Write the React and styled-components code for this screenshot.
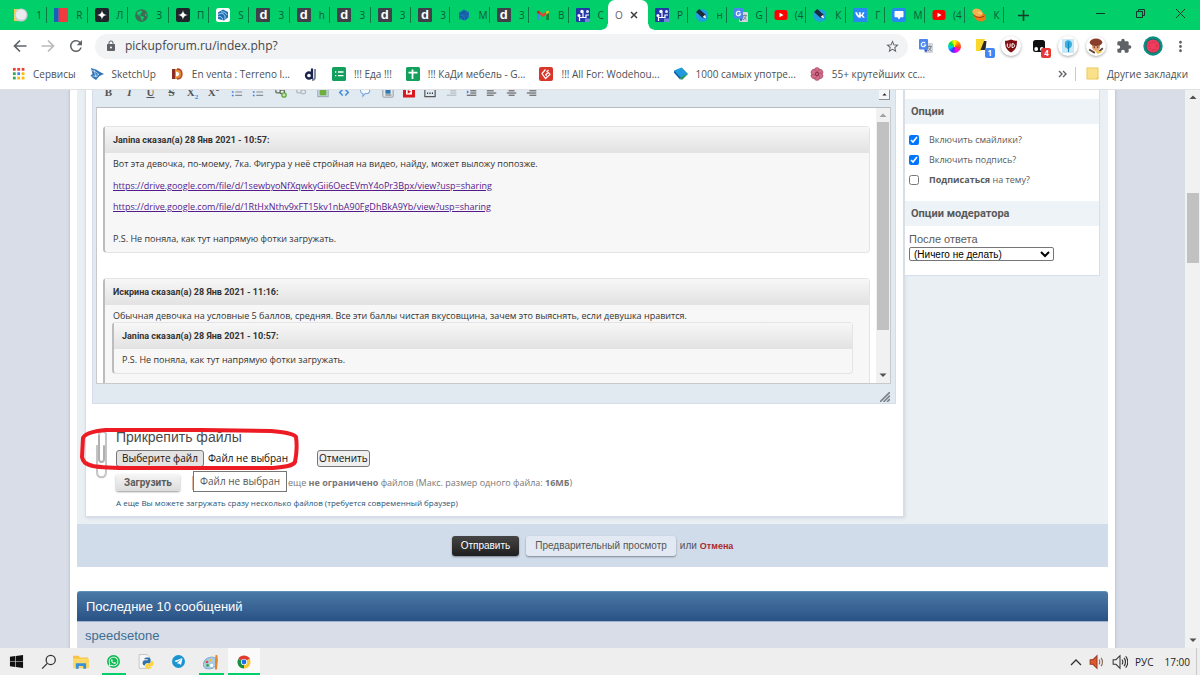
import React, { useRef } from "react";
import styled, { createGlobalStyle, css } from "styled-components";
import { FaVk, FaWhatsapp, FaTelegramPlane, FaWindows, FaGlobeAmericas } from "react-icons/fa";
import { MdLock, MdStarBorder, MdRefresh, MdMoreVert, MdExtension } from "react-icons/md";

const ui = '"Open Sans", "Noto Sans", sans-serif';
const web = '"Liberation Sans", Arial, sans-serif';
const strong = 'Roboto, "Liberation Sans", sans-serif';

const GlobalStyle = createGlobalStyle`
  * { box-sizing: border-box; }
  body { margin: 0; background: #fff; font-family: ${web}; }
  button { font: inherit; padding: 0; border: 0; background: none; color: inherit; cursor: pointer; }
  a { color: inherit; text-decoration: none; }
  p, h2, h3, h4 { margin: 0; }
  svg { display: block; flex: none; }
`;

const Screen = styled.div`
  display: flex;
  flex-direction: column;
  height: 100vh;
  overflow: hidden;
`;

/* ---------- browser window ---------- */

const TabBar = styled.header`
  display: flex;
  align-items: stretch;
  flex: none;
  height: 30px;
  padding-left: 7px;
  background: #00cf6a;
  font: 10px/14px ${ui};
`;

const TabStrip = styled.nav`
  display: flex;
  flex: 0 1 997px;
  min-width: 0;
`;

const TabGroup = styled.div`
  display: flex;
  flex: 1 1 ${(p) => p.$basis}px;
  min-width: 0;
`;

const Tab = styled.button`
  display: flex;
  flex: 1 1 0;
  align-items: center;
  gap: 7px;
  min-width: 0;
  height: 16px;
  margin-top: 7px;
  padding-left: 7px;
  border-right: 1px solid ${(p) => (p.$last ? "transparent" : "#0b7a45")};
  color: #0c5a35;
`;

const TabTitle = styled.span`
  width: 8px;
  white-space: nowrap;
`;

const ActiveTab = styled.div`
  position: relative;
  display: flex;
  flex: 1 1 40px;
  align-items: center;
  gap: 7px;
  padding-left: 7px;
  border-radius: 7px 7px 0 0;
  background: #fff;
  color: #5f6368;

  &::before,
  &::after {
    content: "";
    position: absolute;
    bottom: 0;
    width: 6px;
    height: 6px;
  }
  &::before {
    left: -6px;
    background: radial-gradient(circle at 0 0, transparent 5px, #fff 6px);
  }
  &::after {
    right: -6px;
    background: radial-gradient(circle at 100% 0, transparent 5px, #fff 6px);
  }
`;

const NewTab = styled.button`
  width: 38px;
  display: grid;
  place-items: center;
`;

const WindowButtons = styled.div`
  display: flex;
  margin-left: auto;
  height: 26px;
`;

const WindowButton = styled.button`
  width: 40px;
  display: grid;
  place-items: center;
`;

const Toolbar = styled.div`
  display: flex;
  align-items: center;
  flex: none;
  height: 32px;
  padding: 0 5px 0 6px;
  background: #fff;
`;

const NavButton = styled.button`
  display: grid;
  place-items: center;
  width: 28px;
  height: 28px;
  color: ${(p) => (p.$dim ? "#b8babd" : "#5f6368")};
`;

const Address = styled.div`
  display: flex;
  align-items: center;
  flex: 1;
  height: 25px;
  margin: 0 4px 0 5px;
  padding: 0 8px 0 10px;
  border-radius: 13px;
  background: #f1f3f4;
  color: #5f6368;
`;

const AddressInput = styled.input`
  flex: 1;
  min-width: 0;
  margin-left: 8px;
  padding: 0;
  border: 0;
  outline: 0;
  background: none;
  color: #45484c;
  font: 12px/18px ${ui};
`;

const Extensions = styled.div`
  display: flex;
  flex: 0 0 283px;
`;

const Extension = styled.button`
  position: relative;
  display: grid;
  place-items: center;
  flex: 1;
  height: 28px;
  color: #5f6368;
`;

const Halo = styled.span`
  display: grid;
  place-items: center;
  width: 20px;
  height: 20px;
  border-radius: 50%;
  background: #fff;
  box-shadow: 0 1px 3px rgba(0, 0, 0, 0.35);
`;

const Badge = styled.span`
  position: absolute;
  right: 2px;
  bottom: 2px;
  width: 10px;
  border-radius: 2px;
  background: ${(p) => p.$color};
  color: #fff;
  font: bold 8px/10px ${ui};
  text-align: center;
`;

const Bookmarks = styled.nav`
  display: flex;
  align-items: center;
  flex: none;
  gap: 14px;
  height: 28px;
  padding: 0 12px 4px;
  border-bottom: 1px solid #dfe1e5;
  background: #fff;
  color: #4c5054;
  font: 10px/14px ${ui};
  white-space: nowrap;
`;

const Bookmark = styled.a`
  display: flex;
  align-items: center;
  gap: 8px;
`;

const BookmarkEnd = styled.div`
  display: flex;
  align-items: center;
  gap: 8px;
  margin-left: auto;
`;

const Divider = styled.span`
  width: 1px;
  height: 14px;
  margin-right: 2px;
  background: #c8cacd;
`;

/* ---------- forum page ---------- */

const Viewport = styled.div`
  display: flex;
  flex: 1;
  min-height: 0;
  overflow: hidden;
  background: #d8dde8;
`;

const ScrollArea = styled.main`
  flex: 1;
  min-width: 0;
  overflow: hidden;
`;

const Column = styled.div`
  max-width: 1045px;
  min-height: 600px;
  margin: -10px auto 0;
  padding: 0 7px;
  background: #fff;
  box-shadow: 0 0 3px rgba(90, 100, 130, 0.35);
`;

const FormArea = styled.div`
  display: flex;
  align-items: flex-start;
  gap: 1px;
  padding: 0 8px 7px;
  background: #eaeff3;
`;

const Post = styled.section`
  flex: 1;
  min-width: 0;
  padding: 0 7px 7px 6px;
  border: 1px solid #d5deea;
  border-top: 0;
  background: #fff;
  box-shadow: 1px 1px 3px rgba(120, 140, 165, 0.25);
`;

const Editor = styled.div`
  padding: 0 4px 0 3px;
  border: 1px solid #d4dde8;
  border-top: 0;
  background: #e1e9f1;
`;

const EditorTools = styled.div`
  display: flex;
  align-items: center;
  height: 27px;
  padding: 0 1px 3px 2px;
`;

const ToolGroup = styled.div`
  display: flex;
  margin-right: 2px;
`;

const Tool = styled.button`
  display: grid;
  place-items: center;
  width: ${(p) => p.$width}px;
  height: 14px;
  color: #555;
  font: bold 11px/14px "Liberation Serif", serif;
`;

const Script = styled.small`
  color: ${(p) => p.$color};
  font-size: 7px;
  line-height: 0;
  vertical-align: ${(p) => p.$align};
`;

const Collapse = styled.button`
  display: grid;
  place-items: center;
  align-self: flex-end;
  width: 11px;
  height: 11px;
  margin-left: auto;
  margin-bottom: 4px;
  border: 1px solid #8a8f98;
  border-width: 0 1px 1px 0;
  background: #f4f6f8;
`;

const Frame = styled.div`
  display: flex;
  height: 277px;
  overflow: hidden;
  border: 1px solid #c9c9c9;
  border-top-color: #b8bcc2;
  background: #fff;
`;

const Doc = styled.div`
  flex: 1;
  min-width: 0;
  padding: 18px 6px 0;
  color: #333;
  font: 9px/14px ${ui};
`;

const ScrollTrack = styled.div`
  display: flex;
  flex-direction: column;
  align-items: center;
  flex: none;
  width: ${(p) => p.$width}px;
  padding: 5px 0;
  background: #f1f1f1;
`;

const ScrollThumb = styled.div`
  width: 12px;
  height: ${(p) => p.$height}px;
  margin: ${(p) => p.$top}px 0 auto;
  background: #c1c1c1;
`;

const Quote = styled.blockquote`
  margin: 0 0 25px;
  border: 1px solid #e4e4e4;
  border-left: 2px solid #bcbcbc;
  border-radius: 4px;
  background: #f7f7f7;
`;

const QuoteHead = styled.h4`
  padding: 0 8px;
  background: linear-gradient(#f7f7f7, #e2e2e2);
  font: bold 9px/26px ${strong};
`;

const QuoteBody = styled.div`
  padding: 4px 16px 6px 8px;

  ${Quote} {
    margin: -1px 0 12px -1px;
  }
`;

const QuoteText = styled.p`
  margin-top: ${(p) => p.$gap || 0}px;
`;

const VisitedLink = styled.a`
  color: #551a8b;
  text-decoration: underline;
`;

const EditorFoot = styled.div`
  display: flex;
  align-items: flex-end;
  justify-content: flex-end;
  height: 19px;
  padding: 1px;
`;

const Attach = styled.section`
  position: relative;
  display: flex;
  gap: 8px;
  margin-top: 24px;
  padding-left: 3px;
`;

const AttachBody = styled.div`
  min-width: 0;
`;

const AttachTitle = styled.h3`
  color: #4a4a4a;
  font: 14px/18px ${web};
`;

const FileRow = styled.div`
  display: flex;
  align-items: center;
  height: 17px;
  margin-top: 4px;
  color: #111;
  font: 10px/15px ${ui};
`;

const FormButton = styled.button`
  height: 17px;
  padding: 0 ${(p) => p.$pad}px;
  border: 1px solid #767676;
  border-radius: 3px;
  background: ${(p) => (p.$hover ? "#e3e3e3" : "#efefef")};
`;

const FileName = styled.span`
  flex: 0 0 113px;
  padding-left: 4px;
`;

const UploadRow = styled.div`
  position: relative;
  display: flex;
  align-items: center;
  height: 17px;
  margin-top: 7px;
  color: #777;
  font: 9px/14px ${ui};
  white-space: nowrap;
`;

const UploadButton = styled.button`
  width: 64px;
  height: 17px;
  border-radius: 2px;
  background: linear-gradient(#f6f6f6, #dcdcdc);
  box-shadow: 0 1px 2px rgba(0, 0, 0, 0.4);
  color: #5c5c5c;
  font: bold 10px/14px ${strong};
`;

const UploadNote = styled.span`
  margin-left: 12px;
  padding-left: 95px;
  border-left: 1px solid #e0b8a0;
`;

const Tooltip = styled.span`
  position: absolute;
  top: -3px;
  left: 77px;
  padding: 0 6px;
  border: 1px solid #767676;
  background: #fff;
  color: #575757;
  font: 10px/19px ${ui};
`;

const Hint = styled.p`
  margin-top: 6px;
  color: #1d5278;
  font: 8px/12px ${ui};
`;

const Scribble = styled.svg`
  position: absolute;
  top: -1px;
  left: -12px;
  pointer-events: none;
`;

const Sidebar = styled.aside`
  flex: 0 0 195px;
  padding: 19px 0 14px;
  border-right: 1px solid #d5e0ef;
  border-bottom: 1px solid #d5e0ef;
  background: #fff;
  color: #5a5a5a;
`;

const SideHead = styled.h3`
  padding-left: 6px;
  background: #eef3f7;
  font: bold 11px/25px ${strong};
`;

const OptionList = styled.div`
  padding: 6px 0 11px 4px;
`;

const Option = styled.label`
  display: flex;
  align-items: center;
  gap: 10px;
  height: 20px;
  font: 9px/14px ${ui};
`;

const Checkbox = styled.input`
  width: 10px;
  height: 10px;
  margin: 0;
`;

const AfterReply = styled.div`
  padding: 5px 0 0 4px;
  font: 11px/16px ${web};
`;

const FieldLabel = styled.label`
  display: block;
`;

const Select = styled.select`
  display: block;
  width: 145px;
  height: 14px;
  padding: 0;
  border: 1px solid #767676;
  border-radius: 2px;
  background-color: #fff;
  color: #000;
  font: 10px/12px ${web};
`;

const SubmitBar = styled.div`
  display: flex;
  align-items: center;
  justify-content: center;
  height: 43px;
  background: #d1dceb;
  color: #555;
  font: 10px/14px ${web};
`;

const SubmitButton = styled.button`
  height: 20px;
  padding: 0 9px;
  border-radius: 3px;
  box-shadow: 0 1px 2px rgba(0, 0, 0, 0.4);
  ${(p) =>
    p.$primary
      ? css`
          margin-right: 7px;
          background: linear-gradient(#454545, #1f1f1f);
          color: #fff;
        `
      : css`
          margin-right: 4px;
          background: #e2e9f2;
          color: #555;
        `}
`;

const CancelLink = styled.a`
  margin-left: 3px;
  color: #ad2930;
  font: bold 9px/14px ${web};
`;

const RecentHead = styled.h2`
  margin-top: 24px;
  padding-left: 9px;
  border-top: 1px solid #5b93b8;
  border-bottom: 1px solid #9db3cd;
  border-radius: 3px 3px 0 0;
  background: linear-gradient(#4a79a6, #2a5285);
  color: #fff;
  font: 13px/29px ${web};
`;

const RecentRow = styled.div`
  height: 60px;
  padding-left: 8px;
  background: #d8dde8;
  color: #3f6d90;
  font: 13px/27px ${web};
`;

/* ---------- taskbar ---------- */

const Taskbar = styled.footer`
  display: flex;
  flex: none;
  justify-content: space-between;
  height: 27px;
  background: #eeeeee;
  color: #222;
`;

const TaskButtons = styled.div`
  display: flex;
  flex: 0 0 260px;
`;

const TaskButton = styled.button`
  display: grid;
  place-items: center;
  flex: 1;
  position: relative;
  background: ${(p) => (p.$active ? "#fafafa" : "none")};

  &::after {
    content: "";
    position: absolute;
    inset: auto ${(p) => (p.$active ? 0 : 4)}px 0;
    height: ${(p) => (p.$open ? 2 : 0)}px;
    background: #00cf6a;
  }
`;

const Tray = styled.div`
  display: flex;
  align-items: center;
  gap: 7px;
  margin-right: 3px;
  padding-right: 6px;
  border-right: 1px solid #c9c9c9;
  font: 10px/16px ${ui};
`;

const Clock = styled.span`
  margin-left: 4px;
`;

/* ---------- icons ---------- */

const Tile = styled.span`
  display: grid;
  place-items: center;
  flex: none;
  width: 14px;
  height: 14px;
  border-radius: 1px;
  background: ${(p) => p.$bg};
  color: #fff;
  font: bold 13px/12px ${web};
`;

const Svg = ({ s = 14, children, ...rest }) => (
  <svg width={s} height={s} viewBox="0 0 14 14" fill="none" {...rest}>
    {children}
  </svg>
);

const PaintIcon = () => (
  <Svg>
    <path d="M0 1h8v12H0z" fill="#f2d14a" />
    <circle cx="7" cy="7" r="6.600" fill="#c9cdd3" />
    <circle cx="7" cy="6.600" r="5.200" fill="#e9ebee" />
  </Svg>
);
const FlagIcon = () => (
  <Svg>
    <path d="M0 0h4.500v14H0z" fill="#1263b5" />
    <path d="M4.500 0H14v14H4.500z" fill="#ef3b3f" />
    <path d="M4 0h1.500v14H4z" fill="#7a55a0" />
  </Svg>
);
const SparkIcon = () => (
  <Svg>
    <rect width="14" height="14" rx="2" fill="#20252b" />
    <path d="M7 2c.4 3.300 1.700 4.600 5 5-3.300.4-4.600 1.700-5 5-.4-3.300-1.700-4.600-5-5 3.300-.4 4.600-1.700 5-5z" fill="#fff" />
  </Svg>
);
const SketchTile = ({ tile }) => (
  <Svg>
    {tile && <rect width="14" height="14" rx="2.500" fill="#fff" />}
    <path d="M2 4.500 7 1.500l5 2.500v5.500L8 12.500 2 11z" fill="#1b6fb5" />
    <path d="M2 6.500c3-2 6-1 7 1.500v3.500M2.200 8.700c2-.8 4 .3 4.500 3M5 4c2.500-.6 5 .5 6 3" stroke={tile ? "#b9d6ee" : "#0a4f8c"} strokeWidth=".9" />
  </Svg>
);
const DIcon = () => <Tile $bg="#40404a">d</Tile>;
const GmailIcon = () => (
  <Svg>
    <path d="M1 4.500 3.700 6.500V12H2c-.6 0-1-.4-1-1z" fill="#4285f4" />
    <path d="M13 4.500 10.300 6.500V12H12c.6 0 1-.4 1-1z" fill="#188038" />
    <path d="M3.700 3.500 7 6l3.300-2.500v3L7 9 3.700 6.500z" fill="#ea4335" />
    <path d="M1 4.500C1 2.500 2.500 2.500 3.700 3.500v3L1 4.500z" fill="#c5221f" />
    <path d="M13 4.500c0-2-1.500-2-2.700-1v3L13 4.500z" fill="#fbbc04" />
  </Svg>
);
const ForumIcon = () => (
  <Svg>
    <rect width="14" height="14" rx="1" fill="#2438a8" />
    <path d="M3.500 13V9.500h3.500V4.500M7 9.500h3V7h3" stroke="#fff" strokeWidth="1.200" />
    <circle cx="6" cy="3.500" r="1.700" fill="#fff" />
    <circle cx="3" cy="7.500" r="1.500" fill="#fff" />
    <circle cx="11.500" cy="3.500" r="1.500" fill="#dfe5ff" />
    <path d="M9 10.500h5V14H9z" fill="#6f86dd" />
  </Svg>
);
const PenIcon = () => (
  <Svg>
    <circle cx="7" cy="7.500" r="6.300" fill="#1d9fe0" />
    <path d="m1 4 3.200-3L10.500 6.500l.8 4-4-.8z" fill="#1b2b3c" />
    <path d="m7.600 9 2.600-2.200.9 3.600z" fill="#fff" />
  </Svg>
);
const TranslateIcon = () => (
  <Svg>
    <rect x="5" y="4" width="9" height="10" rx="1" fill="#d3d7dd" />
    <rect width="9" height="10.500" rx="1" fill="#4a86ee" />
    <path d="M5 10.500h4L7 13.500z" fill="#2a56c6" />
    <path d="M6.300 4.300A2.200 2.200 0 1 0 6.600 6H4.600" stroke="#fff" strokeWidth="1.100" />
    <path d="M8.500 7.500H13M10.700 6.500v1M12 7.500c-.3 2-1.500 3.500-3 4.500M9.500 8.500c.7 1.600 2 2.800 3 3.300" stroke="#6b7480" strokeWidth=".8" />
  </Svg>
);
const YoutubeIcon = () => (
  <Svg>
    <rect x=".5" y="2" width="13" height="10" rx="2.500" fill="#f00" />
    <path d="M5.500 4.700v4.600L9.500 7z" fill="#fff" />
  </Svg>
);
const VkIcon = () => (
  <Tile $bg="#2787f5">
    <FaVk size={10} />
  </Tile>
);
const ChatIcon = () => (
  <Svg>
    <rect width="14" height="14" rx="2.500" fill="#2787f5" />
    <path d="M3.500 3h7c.6 0 1 .4 1 1v4.200c0 .6-.4 1-1 1H8.500L7 11.500l-1.500-2.300h-2c-.6 0-1-.4-1-1V4c0-.6.400-1 1-1z" fill="#fff" />
  </Svg>
);
const FoodIcon = () => (
  <Svg>
    <ellipse cx="8" cy="8.700" rx="6" ry="4.700" fill="#e8791d" transform="rotate(20 8 8.700)" />
    <ellipse cx="5.500" cy="4.500" rx="5.300" ry="3.700" fill="#f6b04b" transform="rotate(20 5.500 4.500)" />
    <path d="M1.500 6.500c3 3.700 7 3.700 11 1.500" stroke="#a23c12" strokeWidth="1" />
    <path d="M6 4l4 2" stroke="#ffe0a0" />
  </Svg>
);
const GlobeIcon = () => <FaGlobeAmericas size={13} color="#3f6b55" />;

const AppsIcon = () => (
  <Svg s={13}>
    {["#ea4335", "#ea4335", "#ea4335", "#34a853", "#4285f4", "#fbbc04", "#34a853", "#fbbc04", "#fbbc04"].map((c, i) => (
      <rect key={i} x={1 + (i % 3) * 4.700} y={1 + Math.floor(i / 3) * 4.700} width="3" height="3" fill={c} />
    ))}
  </Svg>
);
const SketchUpIcon = () => (
  <Svg>
    <path d="M1 1l5 1.500L10 5l4 2-4.500 2L6 13 3 11 .5 8.500 2.500 7z" fill="#2e75b8" />
    <path d="M2 3.500l4 1.500 3 2.500-4 1M4 2.500l2 8M2.500 9l5 .5" stroke="#d8e8f6" strokeWidth=".7" />
  </Svg>
);
const VentaIcon = () => (
  <Svg>
    <path d="M3 2h4c3 0 5 2 5 5s-2 5-5 5H3z" fill="#e58a2a" />
    <path d="M2 2h3v10H2z" fill="#8c2f22" />
    <path d="M6 4.500c2 0 3 1 3 2.500S8 9.500 6 9.500z" fill="#fff" />
    <path d="M7 2c3 0 5 2 5 5s-2 5-5 5" stroke="#b3392a" strokeWidth="1.300" />
  </Svg>
);
const DjIcon = () => (
  <Svg>
    <circle cx="5" cy="8.500" r="3" stroke="#1b2350" strokeWidth="2.300" />
    <path d="M8 1.500v10.500" stroke="#1b2350" strokeWidth="2.200" />
    <path d="M11 2v8c0 2-1 3-3 3" stroke="#7b8099" strokeWidth="1.800" />
  </Svg>
);
const FormIcon = () => (
  <Svg>
    <rect width="14" height="14" rx="1.500" fill="#12a05c" />
    <path d="M3 5h1.300M6 5h5.500M3 8.700h1.300M6 8.700h5.500" stroke="#fff" strokeWidth="1.300" />
  </Svg>
);
const SheetIcon = () => (
  <Svg>
    <rect width="14" height="14" rx="1.500" fill="#12a05c" />
    <path d="M2.500 5.700h9M6.500 2.500v9.500" stroke="#fff" strokeWidth="1.800" />
  </Svg>
);
const SwirlIcon = () => (
  <Svg>
    <rect width="14" height="14" rx="2" fill="#d9362b" />
    <path d="M6.500 2.500 3 6.500l3.500 5 4.500-4-1.500-2-2.700 2 .7 1.500M7.500 5l2-2" stroke="#fff" strokeWidth="1.200" />
  </Svg>
);
const BooksIcon = () => (
  <Svg>
    <path d="M0 5 8 1l6 6-6 6z" fill="#2b9a4b" />
    <path d="M0 3.500 7.500.5l6 6.500L6.500 10.500z" fill="#1f9ae0" />
    <path d="M0 3.500v2.200L6.500 13v-2.500z" fill="#0f62a5" />
  </Svg>
);
const FlowerIcon = () => (
  <Svg>
    {[0, 60, 120, 180, 240, 300].map((a) => (
      <circle key={a} cx="7" cy="3.300" r="2.700" fill="#cf6e8a" stroke="#a9405f" strokeWidth=".6" transform={`rotate(${a} 7 7)`} />
    ))}
    <circle cx="7" cy="7" r="2" fill="#8f2646" />
    <circle cx="7" cy="7" r=".8" fill="#f0b8c6" />
  </Svg>
);
const BookmarkFolder = () => (
  <Svg s={13}>
    <path d="M1 1h12v12H1z" fill="#fbe08c" stroke="#ecc95a" />
    <path d="M10 13h3v-3z" fill="#ecc95a" />
  </Svg>
);

const Arrow = ({ flip }) => (
  <Svg>
    <path
      d={flip ? "M.5 7H12M7 1.500 12.500 7 7 12.500" : "M13.500 7H2M7 1.500 1.500 7 7 12.500"}
      stroke="currentColor"
      strokeWidth="1.700"
    />
  </Svg>
);

const ColorWheel = styled.span`
  width: 13px;
  height: 13px;
  border-radius: 50%;
  background: conic-gradient(#ff0, #f80, #f33, #f0f, #33f, #0cf, #0d3, #ff0);
`;

const NoteIcon = () => (
  <Svg>
    <path d="M0 0h9L5 12H0z" fill="#f9d72c" />
    <path d="M8 2h2.500L9.500 11H4.500z" fill="#2a2a2a" />
  </Svg>
);
const ShieldIcon = () => (
  <Svg>
    <path d="M7 .5c2 1 4 1.300 6 1.300 0 5.500-1 9-6 11.700C2 10.800 1 7.300 1 1.800 3 1.800 5 1.500 7 .5z" fill="#800f12" />
    <path d="M3.300 4.500V7c0 2 2.800 2 2.800 0V4.500M8 4.700v3.800c3.500.3 3.500-4 0-3.800z" stroke="#fff" strokeWidth="1" />
  </Svg>
);
const TamperIcon = () => (
  <Svg>
    <rect x="1" y="1" width="12" height="12" rx="2.500" fill="#111" />
    <circle cx="4.200" cy="10" r="1.900" fill="#fff" />
    <circle cx="9.800" cy="10" r="1.900" fill="#fff" />
  </Svg>
);
const BirdIcon = () => (
  <Svg>
    <rect x="1" width="12" height="14" fill="#c9e9f8" />
    <path d="M4 3c2-3 7-2 7 2 0 3-1.500 4-4 5L4 8z" fill="#38b1e2" />
    <path d="M7.500 3v10" stroke="#1787bb" strokeWidth="1.200" />
  </Svg>
);
const FaceIcon = () => (
  <Svg s={16}>
    <circle cx="7" cy="7.500" r="3.500" fill="#e3a078" />
    <ellipse cx="7" cy="3.800" rx="5.500" ry="3.300" fill="#8a3d2a" />
    <path d="M1 10l5 3M13 9l-5 4" stroke="#5c463c" strokeWidth="1.600" />
    <path d="M5 10l8 2-4 1.700z" fill="#f1bd45" />
    <path d="M5 8h1M8 8h1" stroke="#33211b" />
  </Svg>
);
const MelonIcon = () => (
  <Svg s={20}>
    <circle cx="7" cy="7" r="6.800" fill="#0f8f84" />
    <circle cx="7" cy="7" r="5.300" fill="#0a6f66" />
    <circle cx="7" cy="7" r="4.600" fill="#f03c5c" />
    <circle cx="7" cy="7" r="2.800" stroke="#c02945" strokeDasharray="1 1" strokeWidth=".7" />
  </Svg>
);

const Lines = ({ rows, color = "#666", marks }) => (
  <Svg s={12}>
    {rows.map(([a, b], i) => (
      <path key={i} d={`M${a} ${3 + i * 2.600}H${b}`} stroke={color} strokeWidth="1.400" />
    ))}
    {marks}
  </Svg>
);
const ListIcon = () => (
  <Svg s={12}>
    <path d="M5 3h8M5 7h8M5 11h8" stroke="#8a8f96" strokeWidth="1.300" />
    <path d="M1 3h2M1 7h2M1 11h2" stroke="#3b7dd8" strokeWidth="1.800" />
  </Svg>
);
const LinkIcon = ({ off }) => (
  <Svg s={12}>
    <path d="M1 5c0-2 5-2 5 0v2c0 1.500-5 1.500-5 0zM6 6c0-2 5-2 5 0v2c0 1.500-5 1.500-5 0z" stroke={off ? "#b4b9bf" : "#5b6b58"} strokeWidth="1.500" />
    {!off && <circle cx="10.500" cy="10.500" r="3.300" fill="#62a83a" />}
    {!off && <path d="M8.700 10.500h3.600M10.500 8.700v3.600" stroke="#fff" />}
  </Svg>
);
const ImageIcon = () => (
  <Svg s={12}>
    <rect x="1" y="2" width="12" height="10.500" fill="#cfe0f2" stroke="#8c9bab" />
    <path d="M3 4h8v7H3z" fill="#6fae3f" />
  </Svg>
);
const CodeIcon = () => (
  <Svg s={12}>
    <path d="M5.500 4 2 7.500l3.500 3.500M8.500 4 12 7.500l-3.500 3.500" stroke="#3b8ae0" strokeWidth="1.700" />
  </Svg>
);
const BubbleIcon = () => (
  <Svg s={12}>
    <path d="M3 2h8c2 1 2 5 0 6.500L7 9l-2.500 3L4.500 9C1 8 1 3 3 2z" fill="#f3f8fd" stroke="#6fa4dc" strokeWidth="1.200" />
  </Svg>
);
const DiskIcon = () => (
  <Svg s={12}>
    <rect x="1" y="1" width="12" height="12" rx="1" fill="#e6e9ec" stroke="#8b9096" />
    <path d="M4 3h6v6H4z" fill="#2f79b5" />
    <path d="M4 10.500h7" stroke="#555" />
  </Svg>
);
const VideoTool = () => (
  <Svg s={12}>
    <rect y="1" width="14" height="12.500" rx="1" fill="#d8191f" />
    <path d="M3.500 3h7v7h-7z" fill="#fff" />
    <path d="M5.500 4.500v4.500L9.500 6.700z" fill="#d8191f" />
  </Svg>
);
const MoreTool = () => (
  <Svg s={12}>
    <path d="M1 4v8.500h12V4" stroke="#555" strokeWidth="1.400" />
    <path d="M3.500 8.500h1.300M6.300 8.500h1.400M9.200 8.500h1.300" stroke="#333" strokeWidth="1.800" />
  </Svg>
);
const Triangle = ({ down, small, color = "#505050" }) => (
  <svg width={small ? 5 : 8} height={small ? 3 : 5} viewBox="0 0 8 5">
    <path d={down ? "M0.500 0.500h7L4 4z" : "M0.500 4h7L4 .5z"} fill={color} />
  </svg>
);
const Grip = () => (
  <svg width="10" height="10" viewBox="0 0 10 10" stroke="#7c828a" strokeWidth="1.600">
    <path d="M0 10 10 0M3.500 10 10 3.500M7 10l3-3" />
  </svg>
);
const Clip = () => (
  <svg width="13" height="52" viewBox="0 0 13 52" fill="none" strokeLinecap="round">
    <path d="M2 18v26c0 7 9 7 9 0V7c0-5-7-5-7 0v24c0 4 5 4 5 0V18" stroke="#b0b0b0" strokeWidth="2" />
    <path d="M2 18v26c0 7 9 7 9 0V7c0-5-7-5-7 0" stroke="#ececec" strokeWidth=".7" />
  </svg>
);

const SearchIcon = () => (
  <Svg s={16}>
    <circle cx="8.500" cy="5.200" r="4" stroke="#333" strokeWidth="1.100" />
    <path d="M5.500 8.200 1 12.800" stroke="#333" strokeWidth="1.200" />
  </Svg>
);
const FolderIcon = () => (
  <Svg s={16}>
    <path d="M0 1.500h5l1 1.500h7v9H0z" fill="#f5c344" />
    <path d="M0 4h14v8.500H0z" fill="#ffd968" />
    <path d="M2.500 13V8h9v5H9v-2.500H5V13z" fill="#3a8fd9" />
  </Svg>
);
const RoundIcon = styled.span`
  display: grid;
  place-items: center;
  width: 13px;
  height: 13px;
  border-radius: 50%;
  background: ${(p) => p.$bg};
  color: #fff;
`;
const PythonIcon = () => (
  <Svg s={16}>
    <path d="M1 .5h7l2 2v10H1z" fill="#f7f7f7" stroke="#bbb" strokeWidth=".7" />
    <path d="M4 8c0-2 1-2.500 3-2.500h1.500V4.700H5.500C5 2.500 11 2.500 11 4.500v2C11 8 10 8 8.500 8S6 8.500 6 10C4.500 10 4 9 4 8z" fill="#3471a4" />
    <path d="M13.500 8c0 2-1 2.700-3 2.700H9v.6h3c0 2.200-5.500 2.200-5.500.2V10c0-1.500 1-1.500 2.500-1.500S11.500 8 11.500 6c1.500 0 2 1 2 2z" fill="#ffd43b" />
  </Svg>
);
const PaletteIcon = () => (
  <Svg s={16}>
    <path d="M6 3c4-1 6 1 6 4 0 4-3 6-7 6S0 11 .5 8C1 5 3 3.700 6 3z" fill="#a8cbe6" stroke="#6b9cc4" strokeWidth=".7" />
    <circle cx="3.500" cy="7" r="1.200" fill="#e4483f" />
    <circle cx="6.500" cy="5.500" r="1.200" fill="#f5c12e" />
    <circle cx="4" cy="10" r="1.200" fill="#3aa34a" />
    <circle cx="7.500" cy="10" r="1.400" fill="#fff" />
    <path d="M10.500 13.500V5L11 .8h1.500L13 5l-.8 8.500z" fill="#e5842b" />
  </Svg>
);
const ChromeIcon = () => (
  <Svg>
    <path d="M7 7 1.400 3.700A6.500 6.500 0 0 1 12.600 3.700z" fill="#e33b2e" />
    <path d="M7 7 12.600 3.700A6.500 6.500 0 0 1 7 13.500z" fill="#fcc934" />
    <path d="M7 7v6.500A6.500 6.500 0 0 1 1.400 3.700z" fill="#1e8e3e" />
    <path d="M7 3.700h5.600" stroke="#e33b2e" />
    <circle cx="7" cy="7" r="3.100" fill="#fff" />
    <circle cx="7" cy="7" r="2.400" fill="#1a73e8" />
  </Svg>
);
const Speaker = ({ red }) => (
  <Svg s={16}>
    <path d="M1 5h2.500L7 1.500v11L3.500 9H1z" fill={red ? "#e0562f" : "none"} stroke={red ? "#9b3a22" : "#333"} strokeWidth=".9" />
    <path d="M8.700 5c1 1 1 3 0 4M10.500 3.300c1.700 2 1.700 5.400 0 7.400" stroke={red ? "#8a6a5c" : "#333"} />
    {!red && <path d="M12 2c2.200 3 2.200 7 0 10" stroke="#333" />}
  </Svg>
);

/* ---------- data ---------- */

const tabsBefore = [
  [PaintIcon, "1"], [FlagIcon, "R"], [SparkIcon, "Л"], [GlobeIcon, "З"], [SparkIcon, "П"],
  [() => <SketchTile tile />, "S"], [DIcon, "3"], [DIcon, "h"], [DIcon, "3"], [DIcon, "3"],
];
const tabsNear = [[DIcon, "3"], [SketchTile, "М"], [DIcon, "3"], [GmailIcon, "В"], [ForumIcon, "С"]];
const tabsAfter = [
  [ForumIcon, "Р"], [PenIcon, "н"], [TranslateIcon, "G"], [YoutubeIcon, "(4"], [PenIcon, "К"],
  [VkIcon, "Г"], [ChatIcon, "М"], [YoutubeIcon, "(4"], [FoodIcon, "К"],
];

const bookmarks = [
  [AppsIcon, "Сервисы"],
  [SketchUpIcon, "SketchUp"],
  [VentaIcon, "En venta : Terreno l..."],
  [DjIcon, ""],
  [FormIcon, "!!! Еда !!!"],
  [SheetIcon, "!!! КаДи мебель - G..."],
  [SwirlIcon, "!!! All For: Wodehou..."],
  [BooksIcon, "1000 самых употре..."],
  [FlowerIcon, "55+ крутейших сс..."],
];

const full = [1, 12];
const toolGroups = [
  {
    width: 21,
    items: [
      "B",
      <i key="i">I</i>,
      <u key="u">U</u>,
      <s key="s">S</s>,
      <span key="sub">X<Script $align="sub" $color="#3b8ae0">2</Script></span>,
      <span key="sup">X<Script $align="super" $color="#555">2</Script></span>,
    ],
  },
  { width: 21, items: [<ListIcon key="1" />, <ListIcon key="2" />] },
  { width: 21, items: [<LinkIcon key="1" />, <LinkIcon key="2" off />, <ImageIcon key="3" />, <CodeIcon key="4" />, <BubbleIcon key="5" />] },
  { width: 21, items: [<DiskIcon key="1" />, <VideoTool key="2" />, <MoreTool key="3" />] },
  {
    width: 20,
    items: [
      <Lines key="1" color="#b5bac0" rows={[full, [5, 12], [5, 12], full]} />,
      <Lines key="2" rows={[full, [5, 12], [5, 12], full]} marks={<path d="M1 5v4l2.500-2z" fill="#3b7dd8" />} />,
      <Lines key="3" rows={[full, [1, 9], full, [1, 9]]} />,
      <Lines key="4" rows={[full, [3, 10], full, [3, 10]]} />,
      <Lines key="5" rows={[full, [4, 12], full, [4, 12]]} />,
    ],
  },
];

const Tabs = ({ items, basis, openEnd }) => (
  <TabGroup $basis={basis}>
    {items.map(([Icon, title], i) => (
      <Tab key={i} $last={openEnd && i === items.length - 1}>
        <Icon />
        <TabTitle>{title}</TabTitle>
      </Tab>
    ))}
  </TabGroup>
);

function BrowserChrome() {
  return (
    <>
      <TabBar>
        <TabStrip>
          <Tabs items={tabsBefore} basis={404} />
          <Tabs items={tabsNear} basis={197} openEnd />
          <ActiveTab>
            <TabTitle>О</TabTitle>
            <button aria-label="Закрыть вкладку">
              <svg width="8" height="8" viewBox="0 0 8 8" stroke="#3c4043" strokeWidth="1.500">
                <path d="M1 1l6 6M7 1 1 7" />
              </svg>
            </button>
          </ActiveTab>
          <Tabs items={tabsAfter} basis={356} />
        </TabStrip>
        <NewTab aria-label="Новая вкладка">
          <svg width="11" height="11" viewBox="0 0 11 11" stroke="#173d2a" strokeWidth="1.600">
            <path d="M5.500 0v11M0 5.500h11" />
          </svg>
        </NewTab>
        <WindowButtons>
          <WindowButton aria-label="Свернуть">
            <svg width="9" height="9" viewBox="0 0 9 9" stroke="#14352a"><path d="M0 4.500h9" /></svg>
          </WindowButton>
          <WindowButton aria-label="Развернуть">
            <svg width="9" height="9" viewBox="0 0 9 9" fill="none" stroke="#14352a">
              <path d="M.5 2.500h6v6h-6zM2.500 2.500v-2h6v6h-2" />
            </svg>
          </WindowButton>
          <WindowButton aria-label="Закрыть">
            <svg width="9" height="9" viewBox="0 0 9 9" stroke="#14352a"><path d="M0 0l9 9M9 0 0 9" /></svg>
          </WindowButton>
        </WindowButtons>
      </TabBar>
      <Toolbar>
        <NavButton aria-label="Назад"><Arrow /></NavButton>
        <NavButton aria-label="Вперёд" $dim><Arrow flip /></NavButton>
        <NavButton aria-label="Обновить"><MdRefresh size={18} /></NavButton>
        <Address>
          <MdLock size={12} />
          <AddressInput aria-label="Адрес" defaultValue="pickupforum.ru/index.php?" />
          <MdStarBorder size={15} />
        </Address>
        <Extensions>
          <Extension aria-label="Переводчик"><TranslateIcon /></Extension>
          <Extension aria-label="Цвета"><ColorWheel /></Extension>
          <Extension aria-label="Заметки"><NoteIcon /><Badge $color="#4285f4">1</Badge></Extension>
          <Extension aria-label="Блокировщик"><Halo><ShieldIcon /></Halo></Extension>
          <Extension aria-label="Скрипты"><TamperIcon /><Badge $color="#e53935">4</Badge></Extension>
          <Extension aria-label="Птица"><Halo><BirdIcon /></Halo></Extension>
          <Extension aria-label="Персонаж"><Halo><FaceIcon /></Halo></Extension>
          <Extension aria-label="Расширения"><MdExtension size={16} /></Extension>
          <Extension aria-label="Профиль"><MelonIcon /></Extension>
          <Extension aria-label="Меню"><MdMoreVert size={17} /></Extension>
        </Extensions>
      </Toolbar>
      <Bookmarks>
        {bookmarks.map(([Icon, title], i) => (
          <Bookmark key={i} href="#">
            <Icon />
            {title && <span>{title}</span>}
          </Bookmark>
        ))}
        <BookmarkEnd>
          <svg width="9" height="8" viewBox="0 0 9 8" fill="none" stroke="#5f6368" strokeWidth="1.400">
            <path d="M1 1l3 3-3 3M5 1l3 3-3 3" />
          </svg>
          <Divider />
          <Bookmark href="#">
            <BookmarkFolder />
            <span>Другие закладки</span>
          </Bookmark>
        </BookmarkEnd>
      </Bookmarks>
    </>
  );
}

function EditorPanel() {
  return (
    <Editor>
      <EditorTools>
        {toolGroups.map((group, g) => (
          <ToolGroup key={g}>
            {group.items.map((item, i) => (
              <Tool key={i} $width={group.width}>{item}</Tool>
            ))}
          </ToolGroup>
        ))}
        <Collapse aria-label="Свернуть панель"><Triangle small color="#222" /></Collapse>
      </EditorTools>
      <Frame>
        <Doc>
          <Quote>
            <QuoteHead>Janina сказал(а) 28 Янв 2021 - 10:57:</QuoteHead>
            <QuoteBody>
              <QuoteText>Вот эта девочка, по-моему, 7ка. Фигура у неё стройная на видео, найду, может выложу попозже.</QuoteText>
              <QuoteText $gap={8}>
                <VisitedLink href="#">https://drive.google.com/file/d/1sewbyoNfXqwkyGii6OecEVmY4oPr3Bpx/view?usp=sharing</VisitedLink>
              </QuoteText>
              <QuoteText $gap={7}>
                <VisitedLink href="#">https://drive.google.com/file/d/1RtHxNthv9xFT15kv1nbA90FgDhBkA9Yb/view?usp=sharing</VisitedLink>
              </QuoteText>
              <QuoteText $gap={18}>P.S. Не поняла, как тут напрямую фотки загружать.</QuoteText>
            </QuoteBody>
          </Quote>
          <Quote>
            <QuoteHead>Искрина сказал(а) 28 Янв 2021 - 11:16:</QuoteHead>
            <QuoteBody>
              <QuoteText>Обычная девочка на условные 5 баллов, средняя. Все эти баллы чистая вкусовщина, зачем это выяснять, если девушка нравится.</QuoteText>
              <Quote>
                <QuoteHead>Janina сказал(а) 28 Янв 2021 - 10:57:</QuoteHead>
                <QuoteBody>
                  <QuoteText>P.S. Не поняла, как тут напрямую фотки загружать.</QuoteText>
                </QuoteBody>
              </Quote>
            </QuoteBody>
          </Quote>
        </Doc>
        <ScrollTrack $width={14}>
          <Triangle color="#a0a0a0" />
          <ScrollThumb $top={4} $height={208} />
          <Triangle down />
        </ScrollTrack>
      </Frame>
      <EditorFoot><Grip /></EditorFoot>
    </Editor>
  );
}

function AttachPanel() {
  const picker = useRef(null);
  return (
    <Attach>
      <Clip />
      <AttachBody>
        <AttachTitle>Прикрепить файлы</AttachTitle>
        <FileRow>
          <input ref={picker} type="file" hidden aria-label="Прикрепить файлы" />
          <FormButton $pad={5} $hover onClick={() => picker.current.click()}>Выберите файл</FormButton>
          <FileName>Файл не выбран</FileName>
          <FormButton $pad={1}>Отменить</FormButton>
        </FileRow>
        <UploadRow>
          <UploadButton>Загрузить</UploadButton>
          <UploadNote>
            еще <b>не ограничено</b> файлов (Макс. размер одного файла: <b>16МБ</b>)
          </UploadNote>
          <Tooltip role="tooltip">Файл не выбран</Tooltip>
        </UploadRow>
        <Hint>
          <a href="#">А еще Вы можете загружать сразу несколько файлов (требуется современный браузер)</a>
        </Hint>
      </AttachBody>
      <Scribble width="222" height="46" viewBox="0 0 222 46" fill="none" stroke="#ed1c24" strokeWidth="4" strokeLinejoin="round">
        <path d="M26 3C14 4 5 6 3 11L2 30c1 5 3 7 11 9 10 2 24 2 40 2h140c12-1 20-2 22-6 2-10 2-18 1-25-3-4-13-5-25-6l-70-1H60z" />
      </Scribble>
    </Attach>
  );
}

function OptionsPanel() {
  return (
    <Sidebar>
      <SideHead>Опции</SideHead>
      <OptionList>
        <Option><Checkbox type="checkbox" defaultChecked /><span>Включить смайлики?</span></Option>
        <Option><Checkbox type="checkbox" defaultChecked /><span>Включить подпись?</span></Option>
        <Option><Checkbox type="checkbox" /><span><b>Подписаться</b> на тему?</span></Option>
      </OptionList>
      <SideHead>Опции модератора</SideHead>
      <AfterReply>
        <FieldLabel htmlFor="after">После ответа</FieldLabel>
        <Select id="after"><option>(Ничего не делать)</option></Select>
      </AfterReply>
    </Sidebar>
  );
}

export default function App() {
  return (
    <Screen>
      <GlobalStyle />
      <BrowserChrome />
      <Viewport>
        <ScrollArea>
          <Column>
            <FormArea>
              <Post>
                <EditorPanel />
                <AttachPanel />
              </Post>
              <OptionsPanel />
            </FormArea>
            <SubmitBar>
              <SubmitButton $primary>Отправить</SubmitButton>
              <SubmitButton>Предварительный просмотр</SubmitButton>
              или <CancelLink href="#">Отмена</CancelLink>
            </SubmitBar>
            <RecentHead>Последние 10 сообщений</RecentHead>
            <RecentRow><a href="#">speedsetone</a></RecentRow>
          </Column>
        </ScrollArea>
        <ScrollTrack $width={15}>
          <Triangle />
          <ScrollThumb $top={93} $height={70} />
          <Triangle down />
        </ScrollTrack>
      </Viewport>
      <Taskbar>
        <TaskButtons>
          <TaskButton aria-label="Пуск"><FaWindows size={15} color="#111" /></TaskButton>
          <TaskButton aria-label="Поиск"><SearchIcon /></TaskButton>
          <TaskButton aria-label="Проводник"><FolderIcon /></TaskButton>
          <TaskButton aria-label="WhatsApp" $open><RoundIcon $bg="#12b954"><FaWhatsapp size={11} /></RoundIcon></TaskButton>
          <TaskButton aria-label="Python"><PythonIcon /></TaskButton>
          <TaskButton aria-label="Telegram"><RoundIcon $bg="#1b93d1"><FaTelegramPlane size={9} /></RoundIcon></TaskButton>
          <TaskButton aria-label="Paint" $open><PaletteIcon /></TaskButton>
          <TaskButton aria-label="Chrome" $open $active><ChromeIcon /></TaskButton>
        </TaskButtons>
        <Tray>
          <svg width="12" height="8" viewBox="0 0 12 8" fill="none" stroke="#333" strokeWidth="1.300"><path d="M1 7l5-5 5 5" /></svg>
          <Speaker red />
          <Speaker />
          <span>РУС</span>
          <Clock>17:00</Clock>
        </Tray>
      </Taskbar>
    </Screen>
  );
}
